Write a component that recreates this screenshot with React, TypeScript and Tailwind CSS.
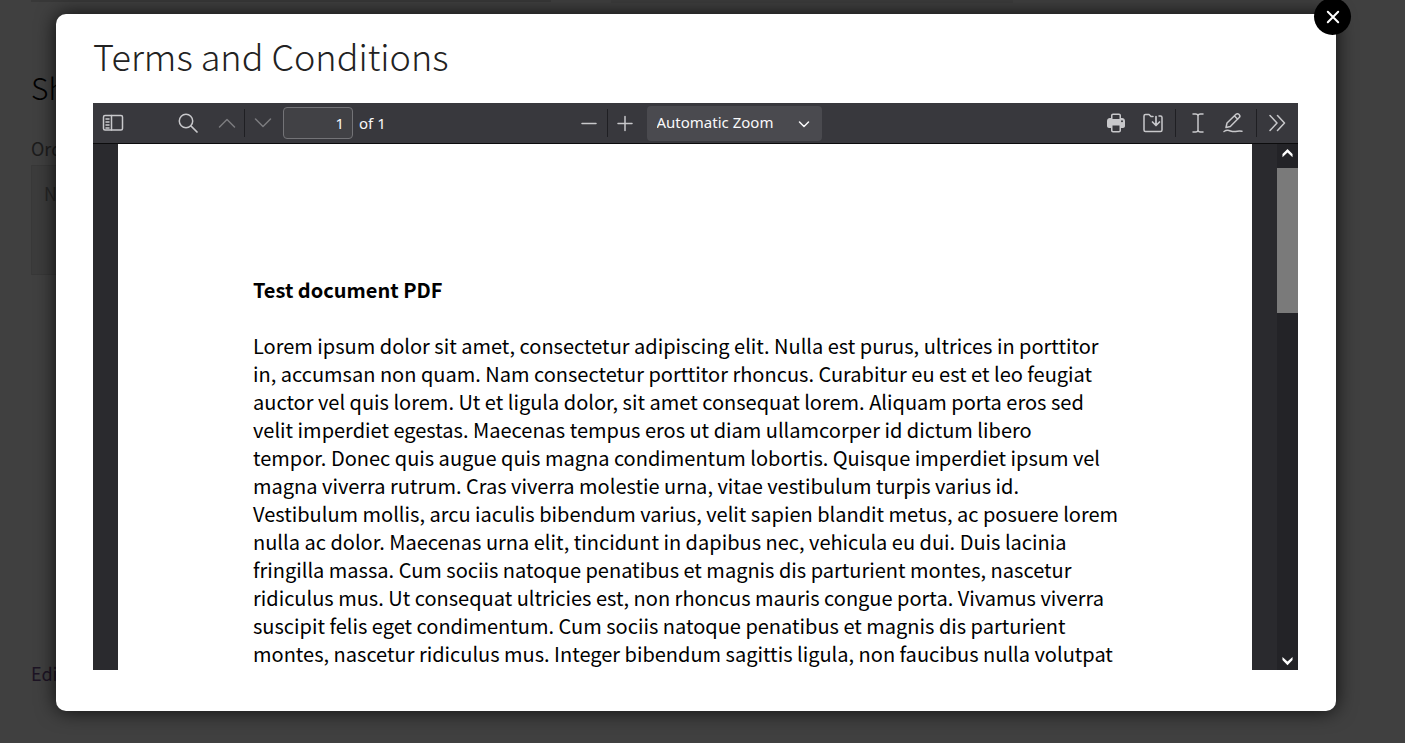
import React from "react";

const lines = [
  "Lorem ipsum dolor sit amet, consectetur adipiscing elit. Nulla est purus, ultrices in porttitor",
  "in, accumsan non quam. Nam consectetur porttitor rhoncus. Curabitur eu est et leo feugiat",
  "auctor vel quis lorem. Ut et ligula dolor, sit amet consequat lorem. Aliquam porta eros sed",
  "velit imperdiet egestas. Maecenas tempus eros ut diam ullamcorper id dictum libero",
  "tempor. Donec quis augue quis magna condimentum lobortis. Quisque imperdiet ipsum vel",
  "magna viverra rutrum. Cras viverra molestie urna, vitae vestibulum turpis varius id.",
  "Vestibulum mollis, arcu iaculis bibendum varius, velit sapien blandit metus, ac posuere lorem",
  "nulla ac dolor. Maecenas urna elit, tincidunt in dapibus nec, vehicula eu dui. Duis lacinia",
  "fringilla massa. Cum sociis natoque penatibus et magnis dis parturient montes, nascetur",
  "ridiculus mus. Ut consequat ultricies est, non rhoncus mauris congue porta. Vivamus viverra",
  "suscipit felis eget condimentum. Cum sociis natoque penatibus et magnis dis parturient",
  "montes, nascetur ridiculus mus. Integer bibendum sagittis ligula, non faucibus nulla volutpat",
];

function Icon({ children, className = "", size = 22 }: { children: React.ReactNode; className?: string; size?: number }) {
  return (
    <svg
      width={size}
      height={size}
      viewBox={`0 0 ${size} ${size}`}
      fill="none"
      stroke="currentColor"
      strokeWidth="1.5"
      strokeLinecap="round"
      strokeLinejoin="round"
      aria-hidden="true"
      className={className}
    >
      {children}
    </svg>
  );
}

function ToolButton({ label, children, dim = false }: { label: string; children: React.ReactNode; dim?: boolean }) {
  return (
    <button
      type="button"
      aria-label={label}
      className={`flex h-8 w-[35px] shrink-0 items-center justify-center ${dim ? "text-[#7b7b7f]" : "text-[#c8c8cb]"}`}
    >
      {children}
    </button>
  );
}

function Divider() {
  return <span className="h-7 w-px shrink-0 bg-[#1f1f23]" />;
}

function Toolbar() {
  return (
    <div className="grid h-[41px] shrink-0 grid-cols-[1fr_auto_1fr] items-center border-b border-[#0c0c0d] bg-[#38383d] font-['Noto_Sans','Open_Sans',sans-serif] text-[15px] text-[#f9f9fa]">
      <div className="flex items-center pl-0.5">
        <ToolButton label="Toggle sidebar">
          <Icon>
            <rect x="1.5" y="3.5" width="19" height="14.5" rx="1.5" />
            <path d="M9.5 3.5V18M4 7h3M4 10h3M4 13h3M4 16h3" />
          </Icon>
        </ToolButton>
        <span className="w-10" />
        <ToolButton label="Find in document">
          <Icon>
            <circle cx="9" cy="9" r="6.7" />
            <path d="M14 14l6 6" strokeWidth="1.7" />
          </Icon>
        </ToolButton>
        <span className="w-1" />
        <ToolButton label="Previous page" dim>
          <Icon>
            <path d="M3.5 15L11 7.500l7.500 7.500" />
          </Icon>
        </ToolButton>
        <Divider />
        <ToolButton label="Next page" dim>
          <Icon>
            <path d="M3.500 7L11 14.500l7.500-7.500" />
          </Icon>
        </ToolButton>
        <input
          type="text"
          aria-label="Page"
          defaultValue="1"
          className="ml-[3px] h-8 w-[70px] rounded-sm border border-[#737377] bg-[#414145] px-2 text-right text-[15px]"
        />
        <span className="ml-1.5">of 1</span>
      </div>

      <div className="flex items-center pl-0.5">
        <ToolButton label="Zoom out">
          <Icon>
            <path d="M4 11.500h14" />
          </Icon>
        </ToolButton>
        <Divider />
        <ToolButton label="Zoom in">
          <Icon>
            <path d="M4 11.500h14M11 4.500v14" />
          </Icon>
        </ToolButton>
        <div className="relative ml-1">
          <select
            aria-label="Zoom"
            className="block h-[35px] w-[175px] appearance-none rounded-sm bg-[#4a4a4f] pb-0.5 pl-2.5 text-[15px] text-[#f9f9fa]"
          >
            <option>Automatic Zoom</option>
          </select>
          <Icon size={12} className="pointer-events-none absolute top-3 right-3">
            <path d="M1.500 4L6 8.500 10.500 4" />
          </Icon>
        </div>
      </div>

      <div className="flex items-center justify-end pr-[3px]">
        <ToolButton label="Print">
          <Icon>
            <path
              fill="currentColor"
              stroke="none"
              fillRule="evenodd"
              d="M6 3.500C6 2.400 6.900 1.500 8 1.500h6c1.100 0 2 .9 2 2V6h1c1.700 0 3 1.300 3 3v5c0 1.100-.9 2-2 2h-2v2.500c0 1.100-.9 2-2 2H8c-1.100 0-2-.9-2-2V16H4c-1.100 0-2-.9-2-2V9c0-1.700 1.300-3 3-3h1zM7.500 3.500V7h7V3.500c0-.3-.2-.5-.5-.5H8c-.3 0-.5.200-.5.500zM7.500 13.500v5c0 .3.200.5.500.5h6c.3 0 .5-.2.500-.5v-5zM16 9.300a1 1 0 1 0 2 0 1 1 0 1 0-2 0z"
            />
          </Icon>
        </ToolButton>
        <span className="w-0.5" />
        <ToolButton label="Save">
          <Icon>
            <path d="M17 4H18.500c1 0 1.500.6 1.500 1.500V18c0 .9-.6 1.500-1.500 1.500h-15C2.600 19.500 2 18.900 2 18V4c0-.9.600-1.500 1.500-1.500h3.500L9 4.500h2" />
            <path d="M14 4.500V13M10.500 10l3.500 3.500 3.500-3.500" strokeWidth="1.700" />
          </Icon>
        </ToolButton>
        <span className="w-[5px]" />
        <Divider />
        <span className="w-1" />
        <ToolButton label="Text selection">
          <Icon>
            <path d="M6 2h2.500C10 2 11 2.800 11 4c0-1.200 1-2 2.500-2H16M11 4v14M6 20h2.500c1.500 0 2.500-.8 2.500-2 0 1.200 1 2 2.500 2H16" />
          </Icon>
        </ToolButton>
        <ToolButton label="Draw">
          <Icon>
            <path d="M4 15.500l1-4.500 9-8.700c.8-.8 2-.8 2.800 0l.4.400c.8.8.8 2 0 2.800L8.300 14.500zM12.500 4l3.200 3.200" />
            <path d="M2 19.500c1.500-1 3-1.500 5-1 2.500.7 4 1.500 6.500 1 2-.5 4-.5 6.500-.300" />
          </Icon>
        </ToolButton>
        <span className="w-1.5" />
        <Divider />
        <span className="w-[3px]" />
        <ToolButton label="Tools">
          <Icon>
            <path d="M3 3.500L10 11l-7 7.500M10.500 3.500L17.500 11l-7 7.500" />
          </Icon>
        </ToolButton>
      </div>
    </div>
  );
}

function Scrollbar() {
  return (
    <div className="flex w-[21px] shrink-0 flex-col bg-[#232327] text-white">
      <button type="button" aria-label="Scroll up" className="flex h-6 shrink-0 justify-center pt-1">
        <svg width="11" height="10" viewBox="0 0 12 10" aria-hidden="true">
          <path d="M6 0.500L11.500 6v3.500L6 4.500 0.500 9.500V6z" fill="currentColor" />
        </svg>
      </button>
      <div className="flex-1">
        <div className="h-[145px] bg-[#7a7a7a]" />
      </div>
      <button type="button" aria-label="Scroll down" className="flex h-4 shrink-0 justify-center pt-0.5">
        <svg width="11" height="10" viewBox="0 0 12 10" aria-hidden="true">
          <path d="M6 9.500L11.500 4V0.500L6 5.500 0.500 0.500V4z" fill="currentColor" />
        </svg>
      </button>
    </div>
  );
}

export default function App() {
  return (
    <div className="relative h-screen overflow-hidden bg-[#404040] font-['Noto_Sans_CJK_SC','Open_Sans',sans-serif]">
      <main className="px-[31px] text-[18px] text-[#1c1c1c]">
        <div className="flex h-[3px] items-start gap-[60px]">
          <div className="h-0.5 w-[520px] bg-[#383838]" />
          <div className="h-full w-[402px] bg-[#3c3c3c]" />
        </div>
        <h2 className="mt-[62px] text-[30px] leading-[44px] font-light text-black">Ship</h2>
        <label htmlFor="notes" className="mt-[27px] block leading-6">
          Order notes
        </label>
        <textarea
          id="notes"
          placeholder="Notes"
          className="mt-[5px] block h-[110px] w-[520px] resize-none border border-[#383838] bg-[#3c3c3c] px-3 py-[15px] leading-6 placeholder:text-[#262626]"
        />
        <a href="#edit" className="mt-[386px] block leading-6 text-[#1d1424]">
          Edit
        </a>
      </main>

      <div className="absolute inset-0 flex pt-3.5 pr-[69px] pb-8 pl-14">
        <section
          role="dialog"
          aria-labelledby="dialog-title"
          className="relative flex min-w-0 flex-1 flex-col rounded-[10px] bg-white px-[37px] pb-[41px] shadow-[0_0_20px_rgba(0,0,0,0.8)]"
        >
          <h1 id="dialog-title" className="pt-[17px] pb-[23px] text-[36px] leading-[49px] font-light text-[#222]">
            Terms and Conditions
          </h1>
          <div className="mr-px flex min-h-0 flex-1 flex-col">
            <Toolbar />
            <div className="flex min-h-0 flex-1 bg-[#2a2a2e]">
              <div className="min-w-0 flex-1 overflow-hidden px-[25px]">
                <article className="min-h-full bg-white px-[135px] pt-[132px] font-['Noto_Sans_CJK_SC','Lato',sans-serif] text-[20px] leading-7 whitespace-nowrap text-black">
                  <h2 className="mb-7 font-bold">Test document PDF</h2>
                  <p>
                    {lines.map((line) => (
                      <React.Fragment key={line}>
                        {line}
                        <br />
                      </React.Fragment>
                    ))}
                  </p>
                </article>
              </div>
              <Scrollbar />
            </div>
          </div>
          <button
            type="button"
            aria-label="Close"
            className="absolute -top-4 -right-[15px] flex size-[37px] items-center justify-center rounded-full bg-black text-white"
          >
            <svg width="14" height="14" viewBox="0 0 14 14" stroke="currentColor" strokeWidth="2" strokeLinecap="round" aria-hidden="true">
              <path d="M1.800 1.800l10.400 10.400M12.200 1.800L1.800 12.200" />
            </svg>
          </button>
        </section>
      </div>
    </div>
  );
}
